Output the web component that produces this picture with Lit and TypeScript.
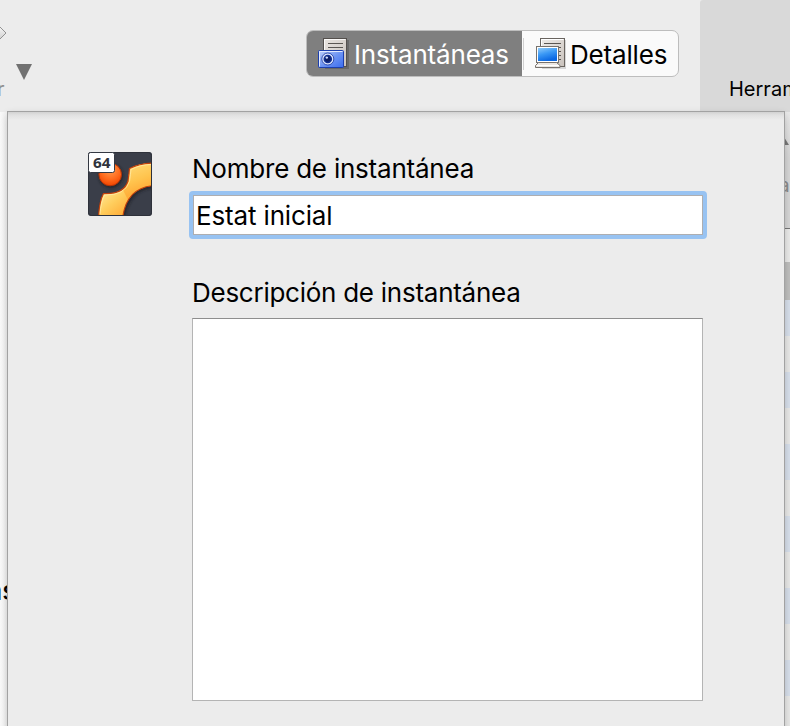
import { LitElement, html, css } from "lit";
import { customElement } from "lit/decorators.js";

@customElement("snapshot-icon")
class SnapshotIcon extends LitElement {
  static styles = css`:host{display:block;width:34px;height:34px} svg{display:block}`;
  render() {
    return html`<svg width="34" height="34" viewBox="0 0 34 34">
      <defs>
        <linearGradient id="p" x1="0" y1="0" x2="1" y2="1"><stop offset="0" stop-color="#e9e5e1"/><stop offset="1" stop-color="#c9c2bc"/></linearGradient>
        <linearGradient id="b" x1="0" y1="0" x2="1" y2="1"><stop offset="0" stop-color="#c3d3fa"/><stop offset=".5" stop-color="#6f95f3"/><stop offset="1" stop-color="#3a6cf0"/></linearGradient>
      </defs>
      <rect x="8" y="3" width="24" height="29" fill="#000" opacity=".18"/>
      <rect x="6.5" y="1.5" width="23" height="28" fill="url(#p)" stroke="#54504d"/>
      <path d="M7.5 28.500V2.500H28.500" fill="none" stroke="#fff" opacity=".8"/>
      <path d="M11 6.500H26M11 10.500H26" stroke="#5b5753"/>
      <rect x="1.500" y="13.500" width="25" height="17" rx="1" fill="url(#b)" stroke="#1c3fae"/>
      <path d="M2.500 29.500V14.500H25.500" fill="none" stroke="#e3ebff"/>
      <circle cx="10.800" cy="22" r="6" fill="#dde6ff" stroke="#1a369b" stroke-width=".8"/>
      <circle cx="10.800" cy="22" r="4.300" fill="#123092"/>
      <circle cx="10.800" cy="22" r="2.700" fill="#0d1d63"/>
      <circle cx="9.800" cy="20.600" r="1.200" fill="#cfdcff"/>
    </svg>`;
  }
}

@customElement("details-icon")
class DetailsIcon extends LitElement {
  static styles = css`:host{display:block;width:34px;height:34px} svg{display:block}`;
  render() {
    return html`<svg width="34" height="34" viewBox="0 0 34 34">
      <defs>
        <linearGradient id="p" x1="0" y1="0" x2="1" y2="1"><stop offset="0" stop-color="#f0edea"/><stop offset="1" stop-color="#c9c2bc"/></linearGradient>
        <linearGradient id="s" x1="0" y1="0" x2=".4" y2="1"><stop offset="0" stop-color="#8fcbfa"/><stop offset=".5" stop-color="#3a98f5"/><stop offset="1" stop-color="#0b68e3"/></linearGradient>
      </defs>
      <rect x="8" y="3" width="24" height="29" fill="#000" opacity=".14"/>
      <rect x="6.500" y="1.500" width="24" height="28" fill="url(#p)" stroke="#69645f"/>
      <path d="M7.500 28.500V2.500H29.500" fill="none" stroke="#fff"/>
      <path d="M10 6.500H27M24 10.500H27M25 14.500H27M25 18.500H27M25 22.500H27" stroke="#5b5753"/>
      <rect x="2.500" y="9.500" width="22" height="16" fill="#fff" stroke="#77726d"/>
      <rect x="4" y="11" width="19" height="13" fill="url(#s)"/>
      <path d="M4.500 25.500H22.500L26 28.500V30.500H1.500V28.500Z" fill="#ebe7e3" stroke="#77726d"/>
      <path d="M3 28.500H25" stroke="#fff"/>
    </svg>`;
  }
}

@customElement("vm-icon")
class VmIcon extends LitElement {
  static styles = css`:host{display:block;width:64px;height:64px} svg{display:block} .bits{font:700 14px "Noto Sans","Open Sans",sans-serif;fill:#30343d}`;
  render() {
    return html`<svg width="64" height="64" viewBox="0 0 64 64">
      <defs>
        <linearGradient id="g" gradientUnits="userSpaceOnUse" x1="16" y1="40" x2="34" y2="62"><stop offset="0" stop-color="#ffe48c"/><stop offset=".5" stop-color="#ffcd5c"/><stop offset="1" stop-color="#ffb03c"/></linearGradient>
        <radialGradient id="o" cx=".5" cy=".3" r=".7"><stop offset="0" stop-color="#ff9b4f"/><stop offset=".6" stop-color="#ff6a1c"/><stop offset="1" stop-color="#f04400"/></radialGradient>
        <linearGradient id="g2" gradientUnits="userSpaceOnUse" x1="44" y1="12" x2="54" y2="38"><stop offset="0" stop-color="#ffd872"/><stop offset=".6" stop-color="#ffc44e"/><stop offset="1" stop-color="#ffae3a"/></linearGradient>
        <clipPath id="c"><rect width="64" height="64" rx="3"/></clipPath>
        <clipPath id="upper"><path d="M34 0H64V64H48L34 36Z"/></clipPath>
        <filter id="f" x="-30%" y="-30%" width="160%" height="160%"><feGaussianBlur stdDeviation="1.800"/></filter>
      </defs>
      <g clip-path="url(#c)">
        <rect width="64" height="64" fill="#3a3e49"/>
        <path d="M11 67Q11 50 17 41Q37 42 41 30Q42 23 43 17Q53 10 67 11V34Q40 34 35 67Z" fill="#16181f" opacity=".65" filter="url(#f)" transform="translate(1 2)"/>
        <circle cx="23" cy="24" r="12" fill="#16181f" opacity=".65" filter="url(#f)"/>
        <path d="M10.500 67Q11 50 15.500 41.500Q36 42.500 40 29Q41 22 41.500 16.500Q52 11 67 11V33.500Q38 35 34.500 67Z" fill="url(#g)"/>
        <path clip-path="url(#upper)" d="M10.500 67Q11 50 15.500 41.500Q36 42.500 40 29Q41 22 41.500 16.500Q52 11 67 11V33.500Q38 35 34.500 67Z" fill="url(#g2)"/>
        <path d="M10.500 67Q11 50 15.500 41.500Q36 42.500 40 29Q41 22 41.500 16.500Q52 11 67 11V33.500Q38 35 34.500 67Z" fill="none" stroke="#c2410c" stroke-width="1.200"/>
        <path d="M12 62Q13 50 16.500 43Q37 43.500 41.500 29.500Q42.500 22 43 17.500Q52 12.500 64 12.500" fill="none" stroke="#fff0b0" stroke-width="1" opacity=".7"/>
        <circle cx="22.200" cy="22.500" r="11.300" fill="url(#o)" stroke="#b43408"/>
      </g>
      <rect x=".5" y=".5" width="63" height="63" rx="3" fill="none" stroke="#2e313a"/>
      <rect x=".5" y=".5" width="26" height="20" rx="2" fill="#fff" stroke="#343842"/>
      <text class="bits" x="5" y="16" textLength="17.500" lengthAdjust="spacingAndGlyphs">64</text>
    </svg>`;
  }
}

@customElement("app-root")
class AppRoot extends LitElement {
  static styles = css`
    :host { display: block; position: relative; width: 790px; height: 726px; overflow: hidden; background: #f4f4f4;
      font-family: Inter, "Liberation Sans", sans-serif; font-size: 26px; color: #000; }
    * { box-sizing: border-box; }
    .window { display: flex; flex-direction: column; height: 726px; }
    .toolbar { display: flex; align-items: flex-start; height: 112px; background: #ececec; flex: none; }
    .nav { width: 306px; height: 112px; flex: none; }
    .nav svg { display: block; }
    .nav text { font-size: 20px; fill: #8f8f8f; }
    .segments { display: flex; width: 373px; height: 47px; margin-top: 30px; border-radius: 7px; border: 1px solid #bdbdbd; overflow: hidden; background: #fafafa; }
    .seg { display: flex; align-items: center; white-space: nowrap; }
    .seg.on { width: 216px; flex: none; margin: -1px 0 -1px -1px; padding-left: 10px; color: #fff; background: #7f7f7f; border: 1px solid #6d6d6d; border-right: 0; border-radius: 7px 0 0 7px; }
    .seg.off { flex: 1; padding-left: 10px; }
    .divider { width: 1px; height: 32px; background: #d0d0d0; margin-left: 1px; align-self: center; flex: none; }
    .seg .t { margin-left: 3px; padding-top: 2px; letter-spacing: -.18px; }
    .seg .tb { margin-left: 2px; }
    .tools { margin-left: auto; width: 90px; height: 112px; background: #d9d9d9; padding: 77px 0 0 29px; border-top-left-radius: 3px; overflow: hidden; font-size: 20px; line-height: 24px; white-space: nowrap; }
    .body { display: flex; flex: 1; justify-content: space-between; }
    .left { width: 8px; background: linear-gradient(90deg, #fafafa, #f0f0f0); padding-top: 463px; overflow: hidden; }
    .left svg, .right svg { display: block; }
    .right { width: 6px; display: flex; flex-direction: column; overflow: hidden; }
    .cap { height: 117px; flex: none; background: linear-gradient(#e9e9e9, #d6d6d6 45px); border-bottom: 1px solid #777; }
    .cap text { font-size: 20px; fill: #8b8b8b; }
    .gap { height: 33px; flex: none; background: #eaeae9; }
    .head { height: 38px; flex: none; background: #bebebd; }
    .row { height: 36px; flex: none; background: #e8e8e7; }
    .row.alt { background: #d7dfeb; }
    .sheet { position: absolute; left: 8px; top: 112px; width: 776px; height: 640px; display: flex; padding: 40px 77px 0 80px;
      background: linear-gradient(#d2d2d2 0, #e1e1e1 3px, #ececec 8px); box-shadow: 0 0 0 1px #a2a2a2, 0 3px 8px rgba(0,0,0,.24); }
    .form { margin-left: 37px; width: 518px; display: flex; flex-direction: column; }
    .label { line-height: 32px; height: 32px; white-space: nowrap; margin-left: 3px; }
    .input { width: 518px; height: 48px; margin-top: 7px; border: 4px solid #98c3f2; border-radius: 4px; background: #fff; }
    .inner { display: flex; align-items: center; height: 40px; border: 1px solid #aeaeb0; padding-left: 2px; white-space: nowrap; letter-spacing: -.15px; }
    .name { padding-top: 1px; letter-spacing: -.22px; }
    .desc { margin-top: 38px; letter-spacing: -.26px; }
    .area { margin: 9px 0 0 3px; width: 511px; height: 383px; background: #fff; border: 1px solid #b4b4b4; border-top-color: #8e8e8e; }
  `;
  render() {
    const rows = Array.from({ length: 12 }, (_, i) => i % 2 === 0);
    return html`
      <div class="window">
        <div class="toolbar">
          <div class="nav">
            <svg width="306" height="112">
              <defs><linearGradient id="dg" x2="0" y2="1"><stop offset="0" stop-color="#f8f8f8"/><stop offset="1" stop-color="#cfcfcf"/></linearGradient></defs>
              <path d="M-1 26L6 33L-1 40Z" fill="url(#dg)" stroke="#929292"/>
              <path d="M16 64H32L24 80Z" fill="#717171"/>
              <text x="-3" y="96">r</text>
            </svg>
          </div>
          <div class="segments">
            <div class="seg on"><snapshot-icon></snapshot-icon><span class="t">Instantáneas</span></div>
            <div class="divider"></div>
            <div class="seg off"><details-icon></details-icon><span class="t tb">Detalles</span></div>
          </div>
          <div class="tools">Herramientas</div>
        </div>
        <div class="body">
          <div class="left"><svg width="8" height="40"><text x="-12.500" y="25" font-size="26" font-weight="500">as</text></svg></div>
          <div class="right">
            <div class="cap"><svg width="6" height="110"><path d="M-11 33L-3 20L5 33Z" fill="#777"/><text x="-5.500" y="80">a</text></svg></div>
            <div class="gap"></div>
            <div class="head"></div>
            ${rows.map((alt) => html`<div class="row ${alt ? "alt" : ""}"></div>`)}
          </div>
        </div>
      </div>
      <div class="sheet">
        <vm-icon></vm-icon>
        <div class="form">
          <div class="label name">Nombre de instantánea</div>
          <div class="input"><div class="inner">Estat inicial</div></div>
          <div class="label desc">Descripción de instantánea</div>
          <div class="area"></div>
        </div>
      </div>`;
  }
}
